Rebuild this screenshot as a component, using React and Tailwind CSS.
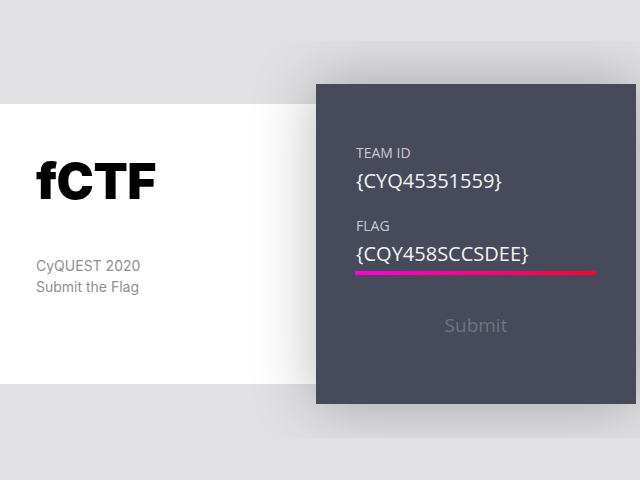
const App = () => {
    return (
        <section className="w-[640px] h-[480px] bg-[#e1e1e3] pt-[41px] overflow-hidden">
            <div className="flex items-start h-[397px] overflow-hidden">
                {/* Intro panel */}
                <div className="mt-[63px] w-[316px] h-[280px] shrink-0 bg-white pl-9 pt-[47px] font-['Inter',sans-serif]">
                    <h1 className="text-[50px] leading-[60px] font-black text-black tracking-[-0.5px]">
                        fCTF
                    </h1>
                    <div className="mt-[44px] text-[14px] leading-[21px] text-[#8f8f8f]">
                        <p>CyQUEST 2020</p>
                        <p>Submit the Flag</p>
                    </div>
                </div>

                {/* Flag form */}
                <form className="relative z-10 mt-[43px] w-[320px] h-[320px] shrink-0 bg-[#474a5a] px-10 pt-[61px] shadow-[0_0_60px_rgba(0,0,0,0.28)] font-['Open_Sans',sans-serif]">
                    <label className="block text-[14px] leading-4 text-[#c9cad0]">TEAM ID</label>
                    <p className="mt-2 text-[20px] leading-6 text-[#f2f2f4]">{"{CYQ45351559}"}</p>

                    <label className="mt-[25px] block text-[14px] leading-4 text-[#c9cad0]">FLAG</label>
                    <p className="mt-2 text-[20px] leading-6 text-[#f2f2f4]">{"{CQY458SCCSDEE}"}</p>
                    <div className="mt-[5px] -ml-px h-[4px] w-[241px] bg-[linear-gradient(to_right,#ff00dd,#ff0030)]"></div>

                    <div className="mt-[38px] text-center">
                        <button type="button" className="text-[19px] leading-6 text-[#707380]">
                            Submit
                        </button>
                    </div>
                </form>
            </div>
        </section>
    )
}

export default App
